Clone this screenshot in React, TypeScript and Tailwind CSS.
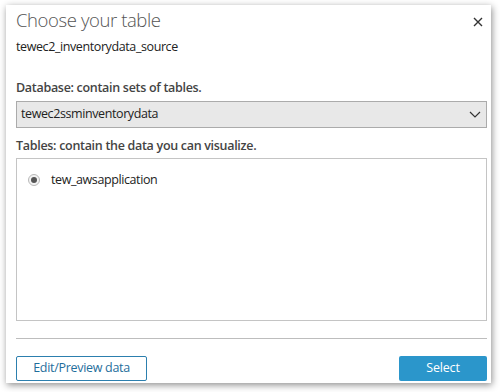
import React from 'react';

const font = { fontFamily: '"Open Sans", "Noto Sans", sans-serif' };

const CloseIcon = () => (
  <svg width="10" height="10" viewBox="0 0 10 10" className="text-[#333]">
    <path d="M1 1 L9 9 M9 1 L1 9" stroke="currentColor" strokeWidth="1.4" fill="none" />
  </svg>
);

const Chevron = () => (
  <svg width="12" height="7" viewBox="0 0 12 7" className="text-[#333]">
    <path d="M1 1 L6 6 L11 1" stroke="currentColor" strokeWidth="1.2" fill="none" />
  </svg>
);

const App: React.FC = () => {
  return (
    <div className="w-[500px] h-[392px] bg-white overflow-hidden pl-[6px] pt-[5px]" style={font}>
      <div className="w-[485px] h-[378px] bg-white shadow-[1px_2px_7px_rgba(0,0,0,0.45)] pl-[10px] pr-[4px] pt-[3px] flex flex-col">
        <div className="flex items-start justify-between">
          <h1 className="text-[18.5px] leading-[24px] text-[#545454] font-light tracking-[-0.4px]">Choose your table</h1>
          <button className="mt-[9px] mr-[4px]">
            <CloseIcon />
          </button>
        </div>

        <p className="mt-[6px] text-[12.5px] leading-[18px] text-[#222] tracking-[-0.4px]">tewec2_inventorydata_source</p>

        <label className="mt-[23px] text-[12.5px] leading-[18px] font-semibold text-[#444] tracking-[-0.3px]">
          Database: contain sets of tables.
        </label>
        <div className="mt-[4px] h-[27px] border border-[#ababab] bg-[#e8e8e8] flex items-center justify-between pl-[4px] pr-[5px]">
          <span className="text-[12.5px] text-[#222] tracking-[-0.4px]">tewec2ssminventorydata</span>
          <Chevron />
        </div>

        <label className="mt-[9px] text-[12.5px] leading-[18px] font-semibold text-[#444] tracking-[-0.3px]">
          Tables: contain the data you can visualize.
        </label>
        <div className="mt-[3px] h-[163px] border border-[#c4c4c4] pt-[12px] pl-[11px]">
          <div className="flex items-center gap-[11px]">
            <span className="w-[12px] h-[12px] rounded-full border border-[#b9b9b9] bg-[#f3f3f3] flex items-center justify-center">
              <span className="w-[6px] h-[6px] rounded-full bg-[#555]" />
            </span>
            <span className="text-[12.5px] leading-[18px] text-[#222] tracking-[-0.4px]">tew_awsapplication</span>
          </div>
        </div>

        <div className="mt-[17px] h-px bg-[#bdbdbd]" />

        <div className="mt-[17px] flex justify-between">
          <button className="w-[131px] h-[25px] border border-[#2c7fae] rounded-[2px] text-[12.5px] text-[#1f6e9c] bg-white tracking-[-0.3px]">
            Edit/Preview data
          </button>
          <button className="w-[88px] h-[25px] rounded-[2px] bg-[#2b96cb] text-[12.5px] text-white tracking-[-0.2px]">
            Select
          </button>
        </div>
      </div>
    </div>
  );
};

export default App;
